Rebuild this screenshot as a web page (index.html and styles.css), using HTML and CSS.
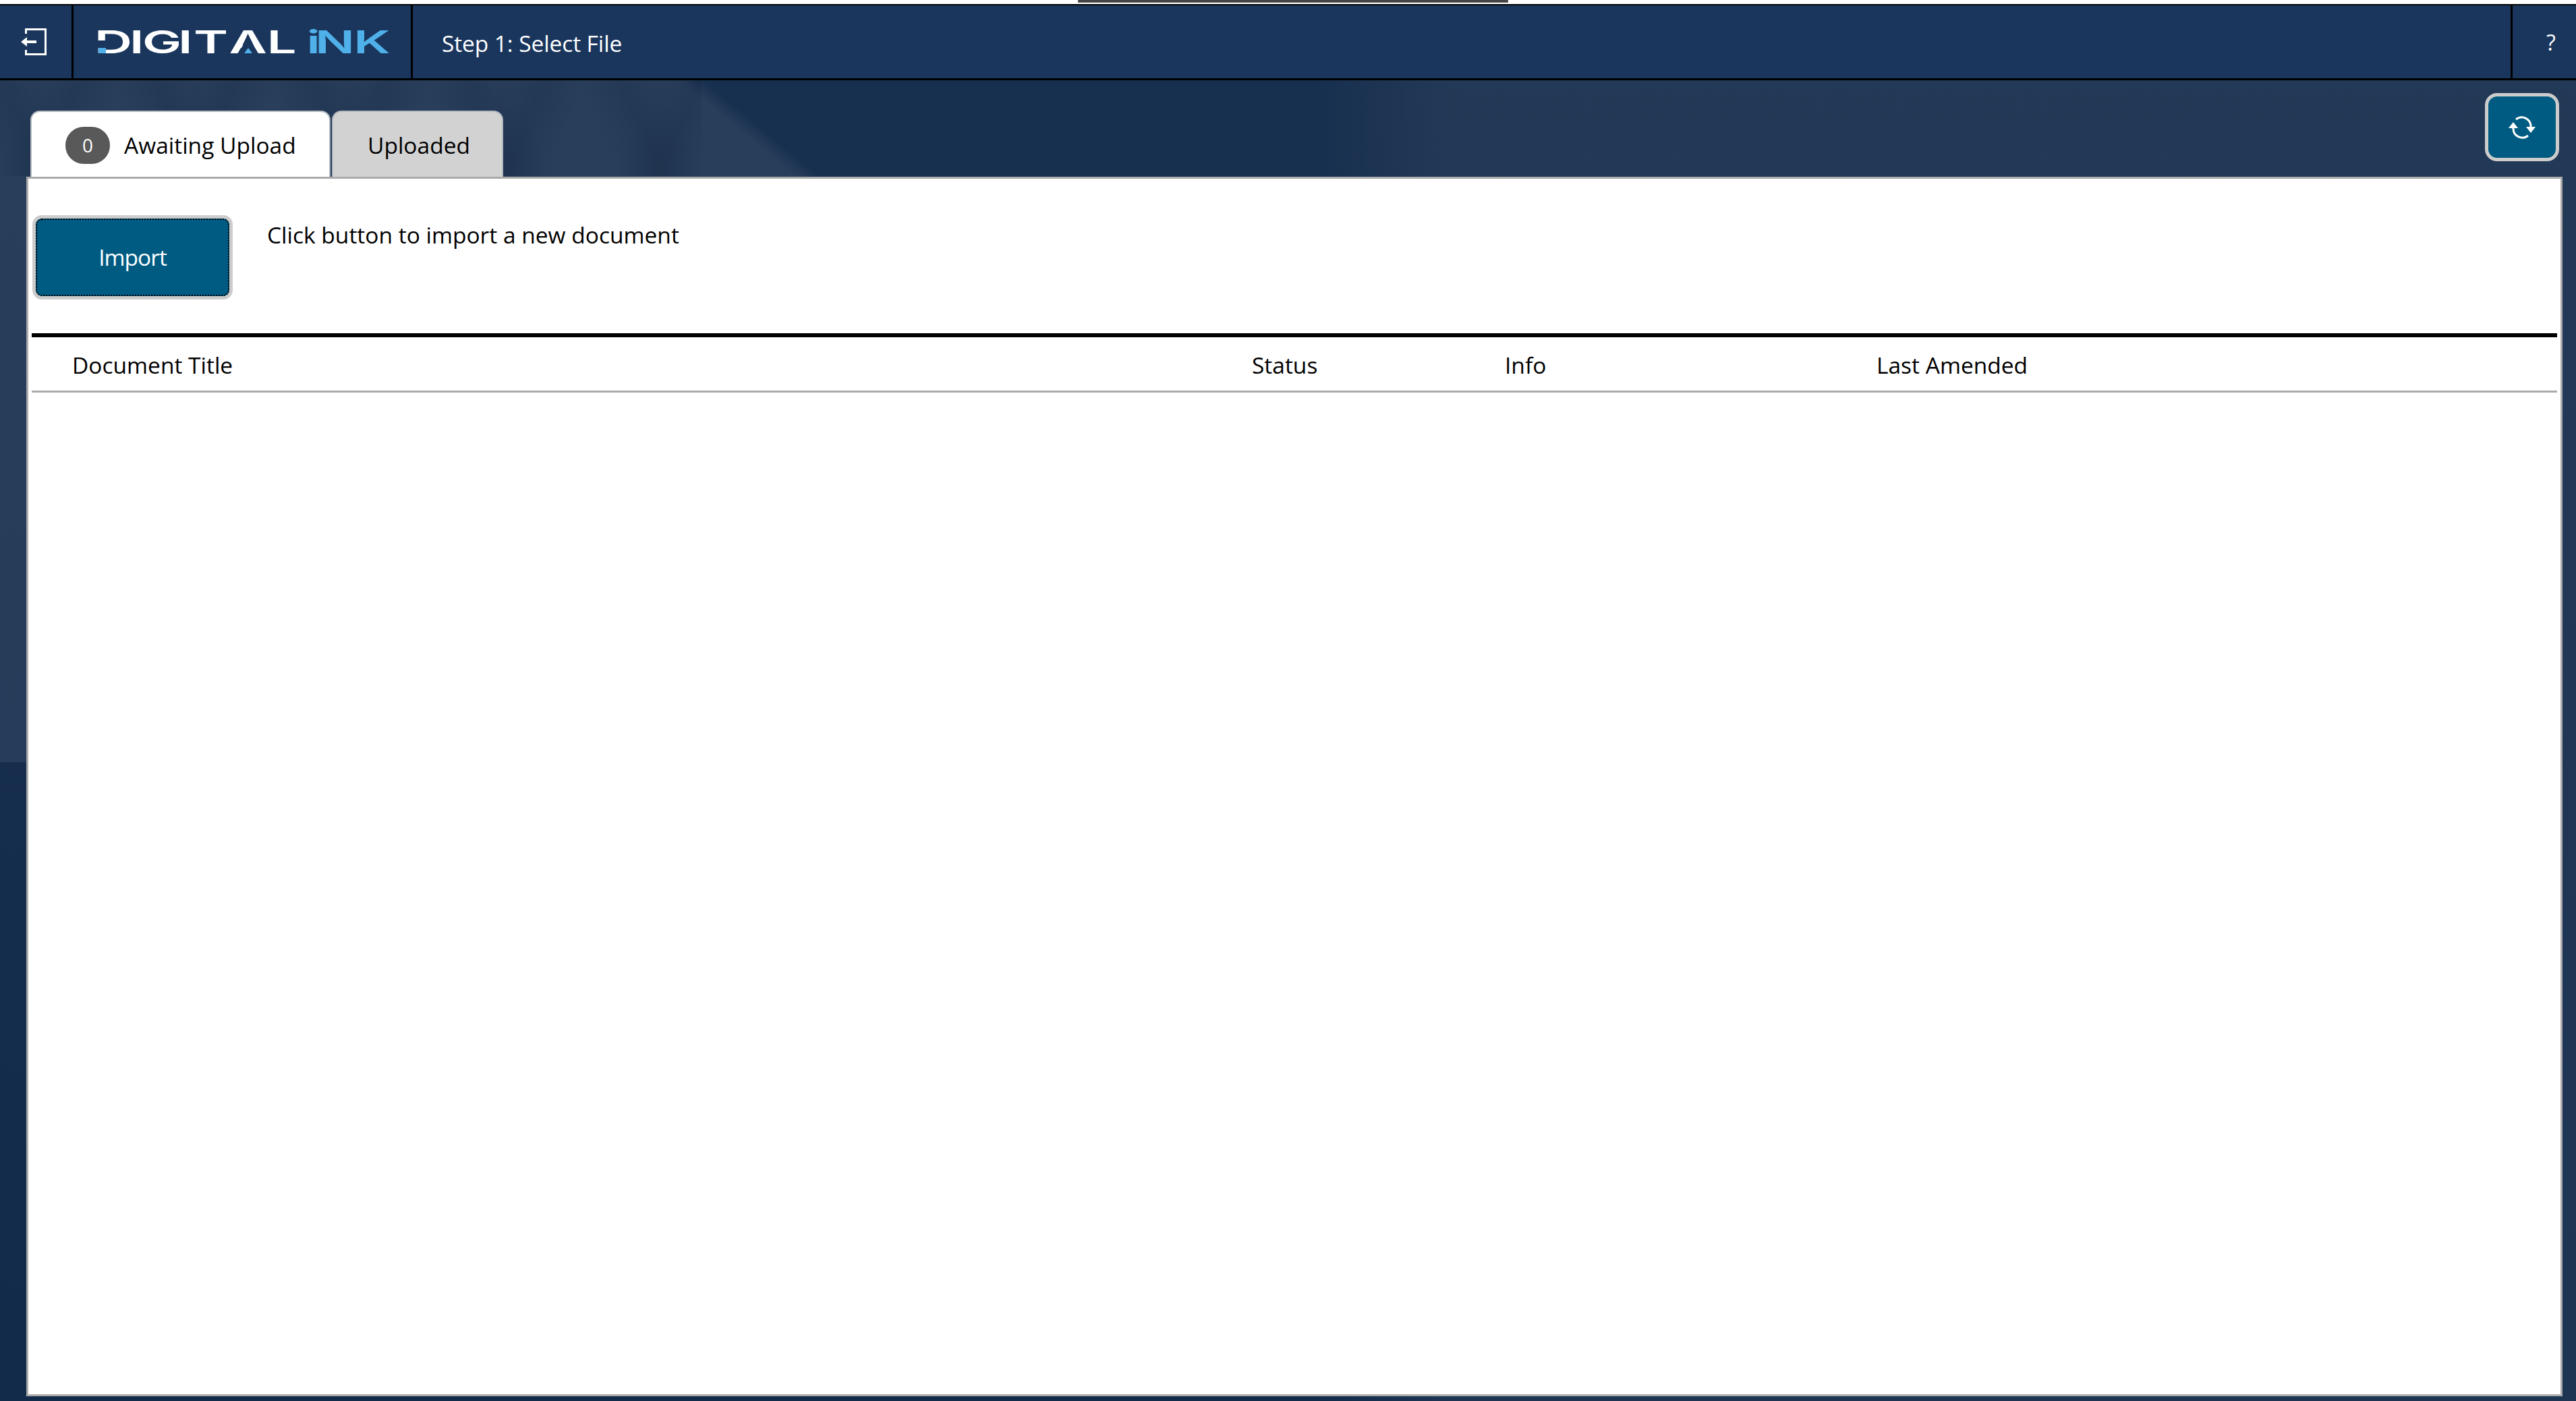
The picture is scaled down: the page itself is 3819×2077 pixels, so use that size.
FILE: index.html
```html
<!DOCTYPE html>
<html lang="en">
<head>
<meta charset="utf-8">
<title>Digital iNK</title>
<link rel="stylesheet" href="styles.css">
</head>
<body>
<div class="topstrip"><div class="taskbar-tab"></div></div>
<header class="header">
  <div class="cell cell-exit">
    <svg class="exit-icon" viewBox="0 0 38 40" width="38" height="40">
      <path d="M7.500 8V1.500H36.500V38.500H7.500V32" fill="none" stroke="#fff" stroke-width="3"/>
      <path d="M0 20L9 13V18H23V22H9V27Z" fill="#fff"/>
    </svg>
  </div>
  <div class="cell cell-logo">
    <svg class="logo" viewBox="-6 -51 446 68" width="446" height="68">
      <g transform="scale(1.65 1)">
        <text class="logo-text" y="0"><tspan x="-3.600 27.900 39.400 71.500 85.500 117.200 151.400">DIGITAL</tspan> <tspan class="logo-blue" x="187 194.500 229.200">iNK</tspan></text>
      </g>
      <rect class="logo-bg" x="-2" y="-19" width="13" height="11"/>
      <rect class="logo-accent" x="0" y="-8" width="11" height="8"/>
      <polygon class="logo-bg" points="222,-28 208,0 236,0"/>
      <polygon class="logo-accent" points="222,-8 216,0 228,0"/>
    </svg>
  </div>
  <div class="cell cell-step">Step 1: Select File</div>
  <div class="cell cell-help">?</div>
</header>
<main class="main">
  <div class="tabbar">
    <div class="tabs">
      <div class="tab tab-active"><span class="badge">0</span><span>Awaiting Upload</span></div>
      <div class="tab tab-idle">Uploaded</div>
    </div>
    <button class="refresh" aria-label="Refresh">
      <svg viewBox="0 0 40 36" width="40" height="36">
        <path d="M7 19A13.500 13.500 0 0 0 29 30" fill="none" stroke="#fff" stroke-width="3"/>
        <path d="M33 17A13.500 13.500 0 0 0 11 6" fill="none" stroke="#fff" stroke-width="3"/>
        <path d="M0 19L7 10L14 19Z" fill="#fff"/>
        <path d="M26 17L33 26L40 17Z" fill="#fff"/>
      </svg>
    </button>
  </div>
  <section class="panel">
    <div class="toolbar">
      <button class="import"><span class="import-inner">Import</span></button>
      <p class="hint">Click button to import a new document</p>
    </div>
    <div class="table-head">
      <div>Document Title</div>
      <div>Status</div>
      <div>Info</div>
      <div>Last Amended</div>
    </div>
  </section>
</main>
</body>
</html>
```
FILE: styles.css
```css
* { box-sizing: border-box; }
html, body { margin: 0; height: 100%; }
body {
  width: 3819px;
  height: 2077px;
  overflow: hidden;
  display: flex;
  flex-direction: column;
  background: #fff;
  font-family: "Open Sans", "Noto Sans", sans-serif;
  font-size: 33.5px;
  color: #000;
}
.topstrip { height: 6px; padding-left: 1598px; }
.taskbar-tab { width: 638px; height: 4px; background: #444; border: 1px solid #666; border-top: 0; }
.header {
  height: 113px;
  flex: none;
  display: flex;
  background: #1a365d;
  border-top: 2px solid #000;
  border-bottom: 3px solid #000;
  color: #fff;
}
.cell { display: flex; align-items: center; }
.cell-exit { width: 109px; border-right: 3px solid #000; padding-left: 31px; }
.cell-logo { width: 503px; border-right: 3px solid #000; padding-left: 31px; }
.cell-step { flex: 1; padding: 3px 0 0 43px; letter-spacing: -0.1px; }
.cell-help { width: 97px; border-left: 3px solid #000; padding-left: 50px; font-size: 32px; }
.logo-text { font-family: "Inter", sans-serif; font-weight: 600; font-size: 47px; fill: #fff; }
.logo-blue { fill: #4fb0ea; }
.logo-bg { fill: #1a365d; }
.logo-accent { fill: #4fb0ea; }
.main {
  flex: 1;
  display: flex;
  flex-direction: column;
  padding: 0 20px 7px 39px;
  background:
    repeating-linear-gradient(66deg, transparent 0, rgba(8,24,50,.16) 60px, transparent 120px, transparent 210px) 0 0 / 1040px 142px no-repeat,
    repeating-linear-gradient(-66deg, transparent 0, rgba(8,24,50,.16) 60px, transparent 120px, transparent 210px) 0 0 / 1040px 142px no-repeat,
    linear-gradient(39.5deg, rgba(255,255,255,.07) 1420px, transparent 1444px) 0 0 / 1400px 1011px no-repeat,
    linear-gradient(90deg, transparent 1950px, rgba(255,255,255,.045) 2150px),
    linear-gradient(180deg, #18304f 0, #162d4d 50%, #132b4b 100%);
}
.tabbar { height: 143px; flex: none; display: flex; justify-content: space-between; align-items: flex-end; position: relative; }
.tabs { display: flex; gap: 2px; padding-left: 6px; }
.tab {
  height: 98px;
  display: flex;
  align-items: center;
  padding-top: 2px;
  border: 2px solid #b4b9c0;
  border-bottom: 0;
  border-radius: 14px 14px 0 0;
}
.tab-active { width: 445px; background: #fff; padding-left: 50px; gap: 21px; }
.tab-idle { width: 254px; background: #d2d2d2; padding-left: 51px; }
.badge {
  width: 66px; height: 55px;
  border-radius: 27px;
  background: #595959;
  color: #fff;
  font-size: 28px;
  display: flex; align-items: center; justify-content: center;
}
.refresh {
  position: absolute;
  right: 5px;
  top: 19px;
  width: 110px;
  height: 101px;
  padding: 0;
  display: flex; align-items: center; justify-content: center;
  background: #005b82;
  border: 5px solid #ccc;
  border-radius: 18px;
}
.panel { flex: 1; background: #fff; border: 3px solid #aaa; padding: 0 5px; }
.toolbar { height: 235px; display: flex; align-items: flex-start; padding: 54px 0 0 1px; border-bottom: 6px solid #000; }
.import {
  width: 297px; height: 125px;
  padding: 0;
  background: #005b82;
  border: 5px solid #ccc;
  border-radius: 14px;
  color: #fff;
  font: inherit;
  display: flex;
}
.import-inner {
  flex: 1;
  display: flex; align-items: center; justify-content: center;
  padding-bottom: 2px;
  letter-spacing: -1px;
  border: 2px dotted #000;
  border-radius: 9px;
}
.hint { margin: 6px 0 0 51px; line-height: 46px; }
.table-head {
  height: 82px;
  display: grid;
  grid-template-columns: 1749px 375px 551px 1fr;
  align-items: center;
  padding: 2px 0 0 60px;
  border-bottom: 3px solid #aaa;
}
```
